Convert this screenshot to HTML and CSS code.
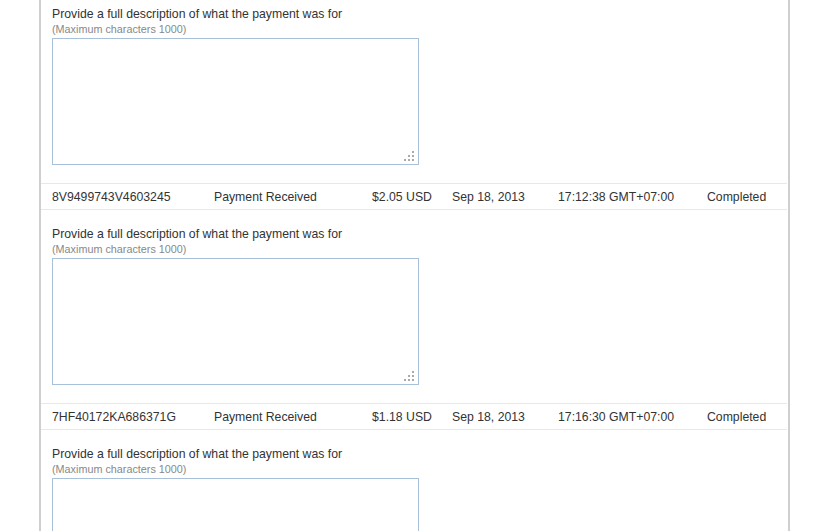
FILE: index.html
```html
<!DOCTYPE html>
<html lang="en">

<head>
    <meta charset="UTF-8">
    <title>Transactions</title>
    <link rel="stylesheet" href="styles.css">
</head>

<body>
    <div class="container">
        <div class="list">
            <div class="desc">
                <label class="desc-label">Provide a full description of what the payment was for</label>
                <div class="desc-hint">(Maximum characters 1000)</div>
                <div class="area-wrap"><textarea class="desc-area"></textarea></div>
            </div>

            <div class="txn-row">
                <span>8V9499743V4603245</span>
                <span>Payment Received</span>
                <span>$2.05 USD</span>
                <span>Sep 18, 2013</span>
                <span>17:12:38 GMT+07:00</span>
                <span>Completed</span>
            </div>
            <div class="desc">
                <label class="desc-label">Provide a full description of what the payment was for</label>
                <div class="desc-hint">(Maximum characters 1000)</div>
                <div class="area-wrap"><textarea class="desc-area"></textarea></div>
            </div>

            <div class="txn-row">
                <span>7HF40172KA686371G</span>
                <span>Payment Received</span>
                <span>$1.18 USD</span>
                <span>Sep 18, 2013</span>
                <span>17:16:30 GMT+07:00</span>
                <span>Completed</span>
            </div>
            <div class="desc">
                <label class="desc-label">Provide a full description of what the payment was for</label>
                <div class="desc-hint">(Maximum characters 1000)</div>
                <div class="area-wrap"><textarea class="desc-area"></textarea></div>
            </div>
        </div>
    </div>
</body>

</html>
```

FILE: styles.css
```css
* {
    box-sizing: border-box;
    margin: 0;
    padding: 0;
}

body {
    font-family: 'Liberation Sans', Arial, sans-serif;
    font-size: 12px;
    color: #333;
    background: #fff;
    overflow: hidden;
}

.container {
    margin-left: 39px;
    width: 751px;
    min-height: 531px;
    border-left: 2px solid #cfcfcf;
    border-right: 2px solid #cfcfcf;
}

.list {
    margin-top: -10px;
}

.desc {
    height: 193px;
    padding: 17px 0 0 11px;
}

.desc-label {
    display: block;
    line-height: 14px;
    font-size: 12.25px;
    color: #333;
}

.desc-hint {
    line-height: 14px;
    font-size: 10.8px;
    color: #888;
    margin-top: 1px;
    margin-bottom: 2px;
}

.area-wrap {
    position: relative;
    width: 367px;
    height: 127px;
}

.desc-area {
    display: block;
    width: 367px;
    height: 127px;
    border: 1px solid #a9c0db;
    resize: none;
    outline: none;
}

/* resize grip dots */
.area-wrap::after {
    content: "";
    position: absolute;
    right: 5px;
    bottom: 4px;
    width: 2px;
    height: 2px;
    background: #aaa;
    box-shadow: -4px 0 #aaa, -8px 0 #aaa, 0 -4px #aaa, -4px -4px #aaa, 0 -8px #aaa;
}

.txn-row {
    display: grid;
    grid-template-columns: 162px 158px 80px 106px 149px 1fr;
    height: 27px;
    padding: 2px 0 0 11px;
    line-height: 23px;
    border-top: 1px solid #e8e8e8;
    border-bottom: 1px solid #e8e8e8;
    margin-right: 1px;
    font-size: 12.25px;
    color: #333;
}
```
